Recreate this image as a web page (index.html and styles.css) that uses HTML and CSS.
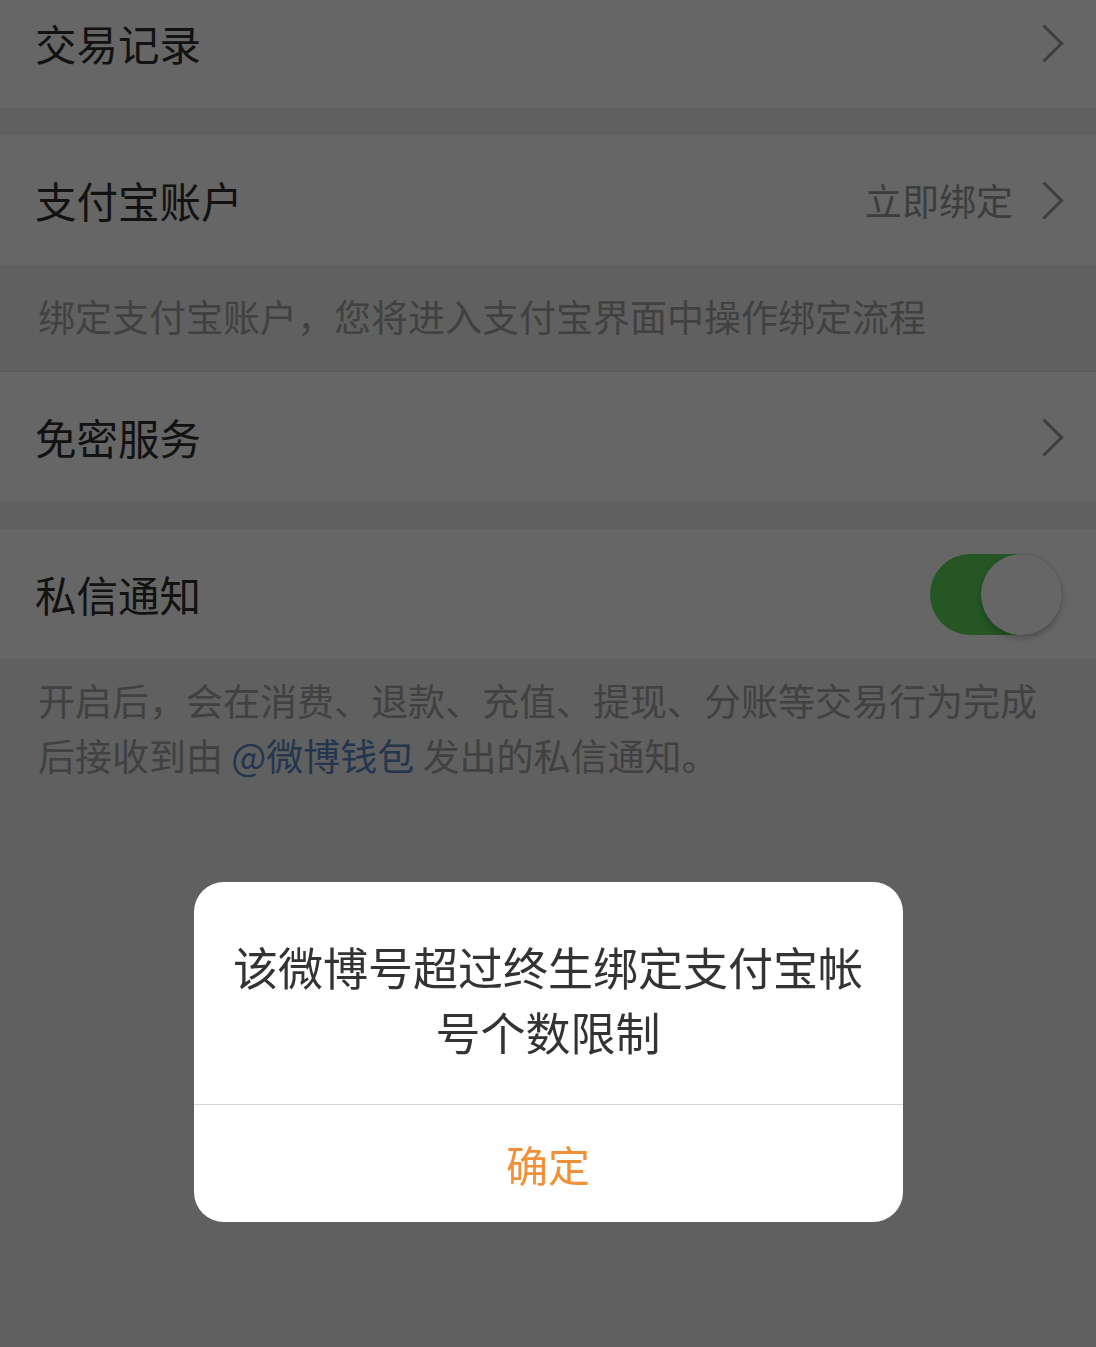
FILE: index.html
```html
<!DOCTYPE html>
<html lang="zh-CN">
<head>
    <meta charset="UTF-8">
    <title>支付设置</title>
    <link rel="stylesheet" href="styles.css">
</head>
<body>
    <div class="page">
        <div class="cell">
            <span class="cell-title">交易记录</span>
            <span class="arrow"></span>
        </div>

        <div class="gap"></div>

        <div class="cell">
            <span class="cell-title">支付宝账户</span>
            <span class="cell-value">立即绑定</span>
            <span class="arrow"></span>
        </div>
        <div class="note note-single">绑定支付宝账户，您将进入支付宝界面中操作绑定流程</div>
        <div class="cell">
            <span class="cell-title">免密服务</span>
            <span class="arrow"></span>
        </div>

        <div class="gap"></div>

        <div class="cell">
            <span class="cell-title">私信通知</span>
            <span class="switch on"><span class="knob"></span></span>
        </div>
        <div class="note">开启后，会在消费、退款、充值、提现、分账等交易行为完成后接收到由 <a class="link">@微博钱包</a> 发出的私信通知。</div>
    </div>

    <div class="mask">
        <div class="dialog">
            <div class="dialog-text">该微博号超过终生绑定支付宝帐号个数限制</div>
            <div class="dialog-btn">确定</div>
        </div>
    </div>
</body>
</html>
```

FILE: styles.css
```css
html, body {
    margin: 0;
    padding: 0;
    height: 100%;
}
body {
    font-family: "Noto Sans CJK SC", "Noto Sans", sans-serif;
    background-color: #efeff0;
    color: #333;
    overflow: hidden;
}
.page {
    margin-top: -22px;
}
.cell {
    display: flex;
    align-items: center;
    height: 130px;
    padding: 0 34px 0 35px;
    background: #fff;
}
.cell-title {
    flex: 1;
    font-size: 41.5px;
    color: #2e2e2e;
}
.cell-value {
    font-size: 37px;
    color: #999;
    margin-right: 18px;
}
.arrow {
    width: 24px;
    height: 24px;
    border-top: 3px solid #999;
    border-right: 3px solid #999;
    transform: rotate(45deg);
    margin-right: 4px;
}
.gap {
    height: 27px;
}
.note {
    padding: 14px 40px 20px 38px;
    font-size: 37px;
    line-height: 55px;
    color: #a2a2a2;
}
.note-single {
    padding: 24px 38px 27px;
    border-bottom: 1px solid #e2e2e2;
}
.link {
    color: #5a86c2;
}
.switch {
    position: relative;
    width: 132px;
    height: 81px;
    border-radius: 41px;
    background: #5cd65a;
}
.switch .knob {
    position: absolute;
    right: 0;
    top: 0;
    width: 81px;
    height: 81px;
    border-radius: 50%;
    background: #fff;
    box-shadow: 0 3px 6px rgba(0, 0, 0, 0.25);
}
.mask {
    position: fixed;
    top: 0;
    left: 0;
    right: 0;
    bottom: 0;
    background: rgba(0, 0, 0, 0.6);
    display: flex;
    justify-content: center;
    align-items: flex-start;
}
.dialog {
    margin-top: 882px;
    width: 709px;
    background: #fff;
    border-radius: 30px;
    overflow: hidden;
}
.dialog-text {
    padding: 52px 30px 40px;
    text-align: center;
    font-size: 45px;
    line-height: 65px;
    color: #333;
    border-bottom: 1px solid #d6d6d6;
}
.dialog-btn {
    height: 117px;
    line-height: 117px;
    text-align: center;
    font-size: 42px;
    color: #f29037;
}
```
